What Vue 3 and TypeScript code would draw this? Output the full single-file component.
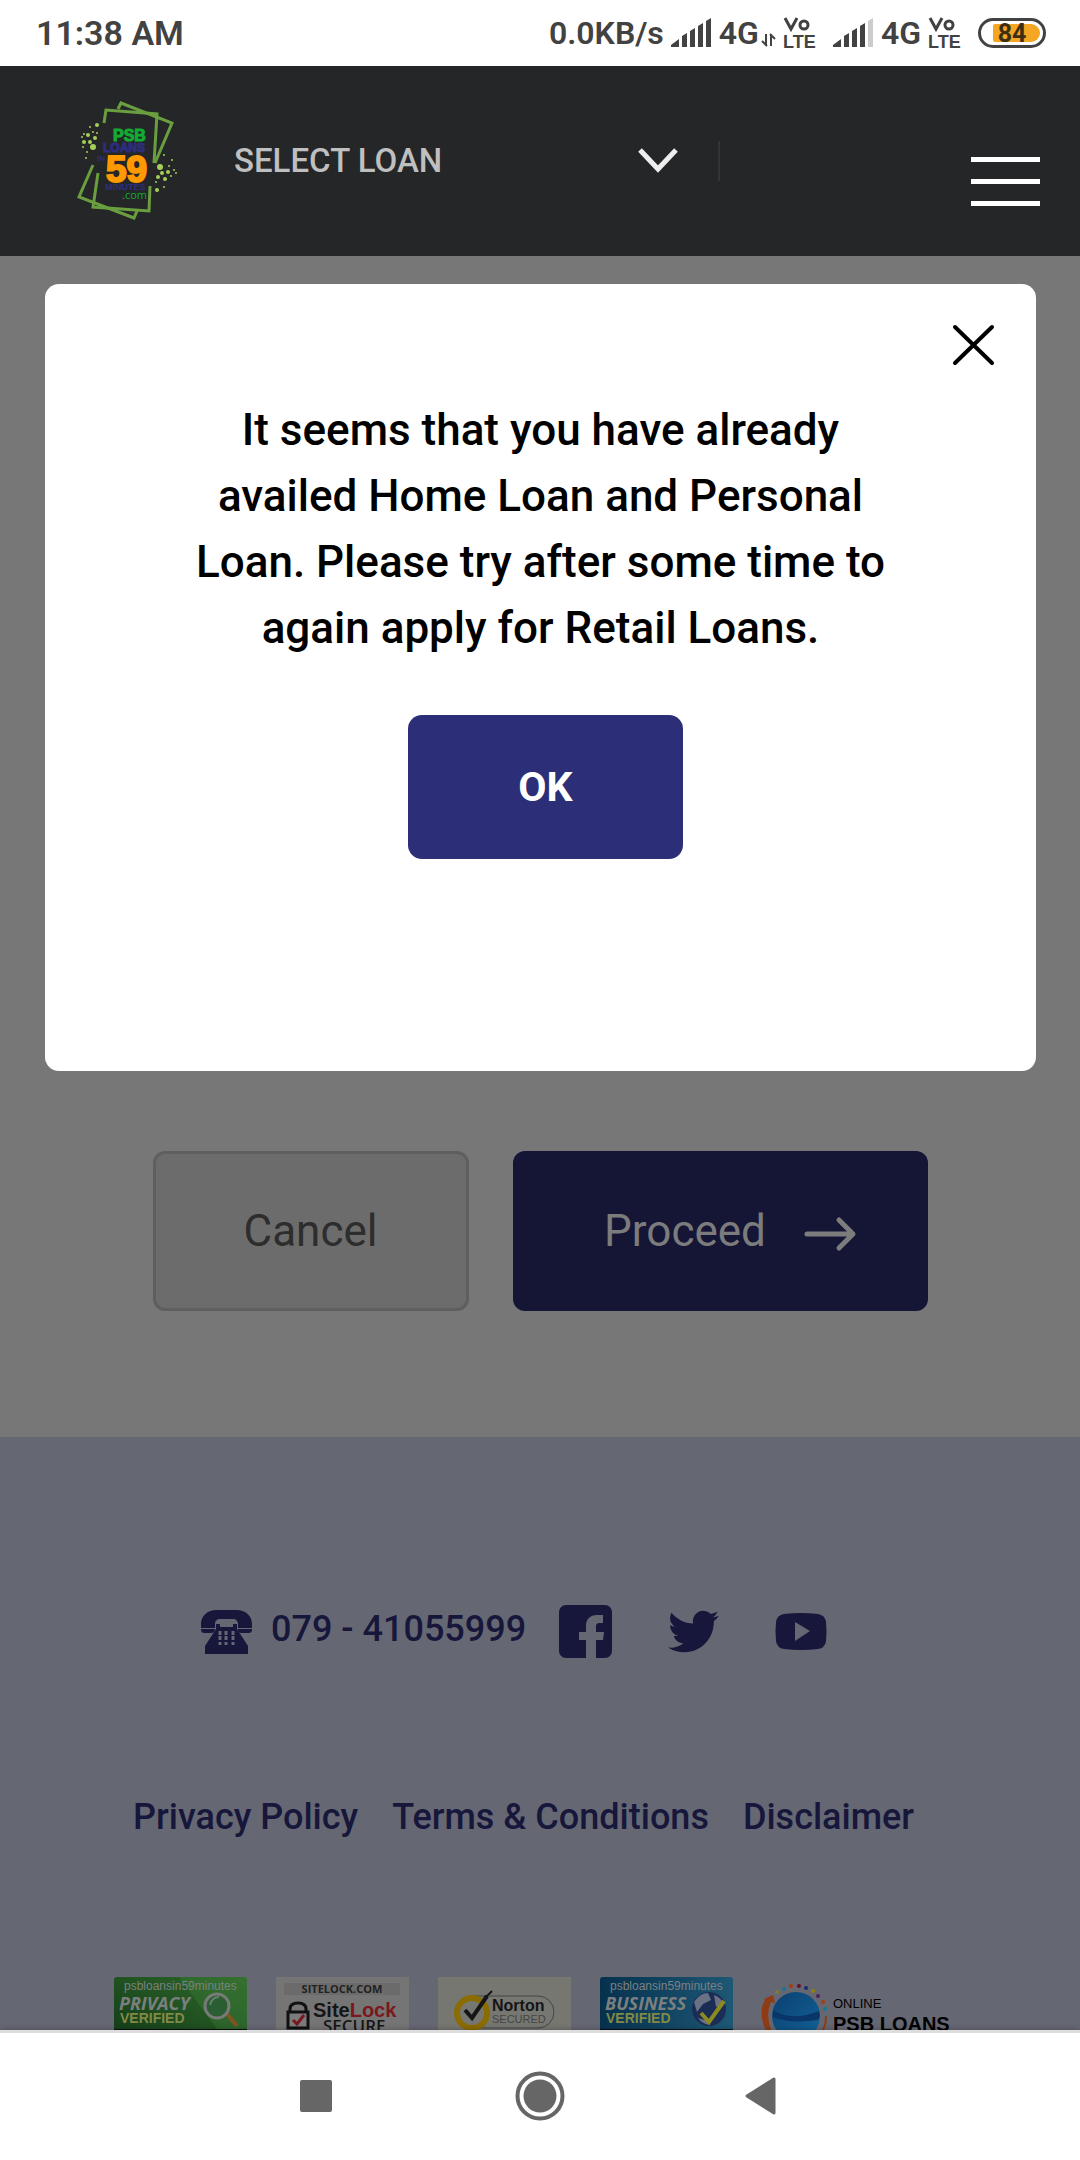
<script setup lang="ts">
import { ref } from 'vue'

interface Dot { x: number; y: number; r: number }
interface ColorDot { x: number; y: number; c: string }

const loan = ref<string>('SELECT LOAN')
const open = ref<boolean>(true)

const sprinkles: Dot[] = [
  { x: 37, y: 35, r: 2 }, { x: 30, y: 37, r: 1 }, { x: 37, y: 43, r: 1 }, { x: 28, y: 45, r: 2 },
  { x: 35, y: 48, r: 2 }, { x: 24, y: 44, r: 1 }, { x: 22, y: 47, r: 1 }, { x: 33, y: 42, r: 1 },
  { x: 24, y: 52, r: 2 }, { x: 30, y: 52, r: 2 }, { x: 33, y: 57, r: 3 }, { x: 23, y: 57, r: 1 },
  { x: 27, y: 62, r: 1 }, { x: 26, y: 68, r: 1 }, { x: 104, y: 65, r: 1 }, { x: 112, y: 70, r: 1 },
  { x: 100, y: 77, r: 3 }, { x: 109, y: 76, r: 1 }, { x: 102, y: 83, r: 2 }, { x: 108, y: 82, r: 2 },
  { x: 114, y: 80, r: 1 }, { x: 98, y: 87, r: 2 }, { x: 105, y: 89, r: 2 }, { x: 111, y: 86, r: 1 },
  { x: 116, y: 83, r: 1 }, { x: 96, y: 92, r: 1 }, { x: 97, y: 100, r: 2 }, { x: 104, y: 97, r: 1 },
]

const orbit: ColorDot[] = [
  { x: 15, y: 15, c: '#7c7c36' }, { x: 22, y: 12, c: '#137a92' }, { x: 29, y: 9, c: '#a83c10' },
  { x: 37, y: 9, c: '#65112f' }, { x: 44, y: 11, c: '#152d6d' }, { x: 51, y: 14, c: '#93800b' },
  { x: 56, y: 19, c: '#4b2263' }, { x: 61, y: 25, c: '#a83c10' }, { x: 63, y: 32, c: '#137a92' },
]
</script>

<template>
  <div class="screen">
    <div class="status">
      <span class="clock">11:38 AM</span>
      <div class="indicators">
        <span class="rate">0.0KB/s</span>
        <svg class="signal" width="40" height="30" viewBox="0 0 40 30" fill="#424242">
          <path d="M0 29v-2l8-6v8zM11 29V18l5-3v14zM19 29V13l5-3v19zM27 29V8l5-3v24zM35 29V3l5-3v29z" />
        </svg>
        <span class="net">4G</span>
        <svg class="updown" width="14" height="14" viewBox="0 0 14 14" fill="none" stroke="#424242" stroke-width="2">
          <path d="M4 1v11M5 13L0 8M9 13V2M8 1l5 5" />
        </svg>
        <svg class="volte" width="33" height="32" viewBox="0 0 33 32" fill="#424242">
          <path d="M1 1l6 11 6-11" fill="none" stroke="#424242" stroke-width="3" />
          <circle cx="20" cy="8" r="4" fill="none" stroke="#424242" stroke-width="3" />
          <text x="-1" y="31" class="lte">LTE</text>
        </svg>
        <svg class="signal two" width="40" height="30" viewBox="0 0 40 30" fill="#424242">
          <path d="M0 29v-2l8-6v8zM11 29V18l5-3v14zM19 29V13l5-3v19zM27 29V8l5-3v24z" />
          <path d="M35 29V3l5-3v29z" fill="#ccc" />
        </svg>
        <span class="net">4G</span>
        <svg class="volte" width="33" height="32" viewBox="0 0 33 32" fill="#424242">
          <path d="M1 1l6 11 6-11" fill="none" stroke="#424242" stroke-width="3" />
          <circle cx="20" cy="8" r="4" fill="none" stroke="#424242" stroke-width="3" />
          <text x="-1" y="31" class="lte">LTE</text>
        </svg>
        <svg class="battery" width="68" height="30" viewBox="0 0 68 30">
          <rect x="1.5" y="1.5" width="65" height="27" rx="13.5" fill="#fff" stroke="#424242" stroke-width="3" />
          <path d="M17 6h36a9 9 0 0 1 0 18H17a2 2 0 0 1-2-2V8a2 2 0 0 1 2-2z" fill="#f5a623" />
          <text x="34" y="24" text-anchor="middle" class="charge">84</text>
        </svg>
      </div>
    </div>

    <header class="header">
      <a class="logo" href="#" aria-label="PSB Loans in 59 Minutes">
        <svg width="140" height="140" viewBox="0 0 140 140">
          <g fill="none" stroke="#6a9f3f" stroke-width="3">
            <path d="M44 33l2-13 51 4-3 49" />
            <path d="M58 19l3-6 51 20-17 40" />
            <path d="M38 83l-5 34 56 4 1-25" />
            <path d="M33 75l-14 32 55 21 3-7" />
          </g>
          <circle v-for="(d, i) in sprinkles" :key="i" :cx="d.x" :cy="d.y" :r="d.r" fill="#a6cf5a" />
          <g class="mark">
            <text x="53" y="51" font-size="16" fill="#12ac33" stroke="#12ac33">PSB</text>
            <text x="43" y="62" font-size="12" fill="#2d2e7f" stroke="#2d2e7f">LOANS</text>
            <text x="37" y="71" font-size="8" fill="#2d2e7f">IN</text>
            <text x="46" y="92" font-size="37" fill="#f90" stroke="#f90" stroke-width="2">59</text>
            <text x="45" y="100" font-size="9" fill="#2d2e7f">MINUTES</text>
          </g>
          <text x="62" y="109" class="com">.com</text>
        </svg>
      </a>
      <label class="picker">
        <select v-model="loan" aria-label="Select loan">
          <option>SELECT LOAN</option>
        </select>
        <svg width="36" height="26" viewBox="0 0 36 26" fill="none" stroke="#eee" stroke-width="5">
          <path d="M0 2l18 19L36 2" />
        </svg>
      </label>
      <button class="menu" type="button" aria-label="Menu"><i></i><i></i><i></i></button>
    </header>

    <div class="view">
      <main class="actions">
        <button class="btn cancel" type="button">Cancel</button>
        <button class="btn proceed" type="button">
          Proceed
          <svg width="52" height="34" viewBox="0 0 52 34" fill="none" stroke="#7c7c7c" stroke-width="5" stroke-linecap="round" stroke-linejoin="round">
            <path d="M3 17h45M35 3l14 14-14 14" />
          </svg>
        </button>
      </main>

      <footer class="footer">
        <div class="contact">
          <a class="phone" href="tel:07941055999">
            <svg width="52" height="44" viewBox="0 0 52 44" fill="#17163b">
              <path d="M1 18v-4C1 7 6 0 17 0h19c11 0 16 7 16 14v4H38v-4c0-3-2-5-5-5H20c-3 0-5 2-5 5v4zM1 19h14c0 3-2 4-4 4H5c-3 0-4-1-4-4zM38 19h14c0 3-1 4-4 4h-6c-3 0-4-1-4-4z" />
              <path d="M16 14h4v3h13v-3h4v5l11 17v8H5v-8l11-17z" />
              <path d="M20 21v4M26 21v4M33 21v4M20 26v4M26 26v4M33 26v4M20 32v3M26 32v3M33 32v3" stroke="#656773" stroke-width="3" />
            </svg>
            <span>079 - 41055999</span>
          </a>
          <a class="facebook" href="#" aria-label="Facebook">
            <svg width="53" height="53" viewBox="0 0 53 53" fill="#17163b">
              <path d="M7 0h39a7 7 0 0 1 7 7v39a7 7 0 0 1-7 7H37V35h7l1-8h-8v-5c0-3 1-4 4-4h3v-8h-6c-7 0-11 4-11 11v6h-7v8h7v18H7a7 7 0 0 1-7-7V7a7 7 0 0 1 7-7z" />
            </svg>
          </a>
          <a class="twitter" href="#" aria-label="Twitter">
            <svg width="51" height="43" viewBox="0 2 24 20" fill="#17163b">
              <path d="M23.953 4.57a10 10 0 01-2.825.775 4.958 4.958 0 002.163-2.723c-.951.555-2.005.959-3.127 1.184a4.92 4.92 0 00-8.384 4.482C7.69 8.095 4.067 6.13 1.64 3.162a4.822 4.822 0 00-.666 2.475c0 1.71.87 3.213 2.188 4.096a4.904 4.904 0 01-2.228-.616v.06a4.923 4.923 0 003.946 4.827 4.996 4.996 0 01-2.212.085 4.936 4.936 0 004.604 3.417 9.867 9.867 0 01-6.102 2.105c-.39 0-.779-.023-1.17-.067a13.995 13.995 0 007.557 2.209c9.053 0 13.998-7.496 13.998-13.985 0-.21 0-.42-.015-.63A9.935 9.935 0 0024 4.59z" />
            </svg>
          </a>
          <a class="youtube" href="#" aria-label="YouTube">
            <svg width="52" height="37" viewBox="0 0 52 37">
              <path d="M9 1q17-2 34 0 7 1 8 8 1 10 0 19-1 7-8 8-17 2-34 0-7-1-8-8-1-10 0-19 1-7 8-8z" fill="#17163b" />
              <path d="M20 9l15 9-15 10z" fill="#656773" />
            </svg>
          </a>
        </div>

        <nav class="links">
          <a href="#">Privacy Policy</a>
          <a href="#">Terms &amp; Conditions</a>
          <a href="#">Disclaimer</a>
        </nav>

        <div class="badges">
          <svg width="133" height="70" viewBox="0 0 133 70">
            <defs>
              <linearGradient id="green" x1="0" x2="1" y1="1" y2="0">
                <stop offset="0" stop-color="#123817" /><stop offset="1" stop-color="#2f6b2b" />
              </linearGradient>
            </defs>
            <rect width="133" height="70" rx="3" fill="url(#green)" />
            <path d="M65 0h68v52H103z" fill="#3d7a38" opacity=".4" />
            <path d="M0 52h133v18H0z" fill="#0c120d" />
            <text x="10" y="13" class="host">psbloansin59minutes</text>
            <text x="5" y="33" class="seal">PRIVACY</text>
            <text x="6" y="46" class="verified">VERIFIED</text>
            <path d="M113 37l10 12" stroke="#7f5420" stroke-width="4" />
            <circle cx="103" cy="29" r="12" fill="#2a5d32" stroke="#777b78" stroke-width="3" />
            <path d="M96 28q2-8 9-8" stroke="#66816a" stroke-width="2" fill="none" />
          </svg>
          <svg width="133" height="70" viewBox="0 0 133 70">
            <rect width="133" height="70" fill="#757575" />
            <rect x="8" y="6" width="116" height="12" fill="#6b6b6b" />
            <text x="66" y="16" text-anchor="middle" class="site">SITELOCK.COM</text>
            <path d="M14 35v-3q0-6 8-6t8 6v3" fill="none" stroke="#111" stroke-width="3" />
            <rect x="12" y="35" width="20" height="16" fill="#7b7b7b" stroke="#111" stroke-width="3" />
            <path d="M17 43l4 4 7-9" fill="none" stroke="#7b171d" stroke-width="3" />
            <text x="37" y="40" class="lock"><tspan fill="#151515">Site</tspan><tspan fill="#7b171d">Lock</tspan></text>
            <text x="47" y="55" class="secure">SECURE</text>
          </svg>
          <svg width="133" height="70" viewBox="0 0 133 70">
            <rect width="133" height="70" fill="#777772" />
            <path d="M34 19h66a16 16 0 0 1 0 32H34" fill="none" stroke="#444" stroke-width="1" />
            <circle cx="34" cy="36" r="15" fill="#777772" stroke="#8a6c03" stroke-width="6" />
            <path d="M27 33l7 8 15-22" fill="none" stroke="#151515" stroke-width="4" />
            <path d="M48 20l6-6" stroke="#151515" stroke-width="2" />
            <text x="54" y="34" class="norton">Norton</text>
            <text x="54" y="46" class="secured">SECURED</text>
          </svg>
          <svg width="133" height="70" viewBox="0 0 133 70">
            <defs>
              <linearGradient id="blue" x1="0" x2="1">
                <stop offset="0" stop-color="#06314e" /><stop offset="1" stop-color="#1d5875" />
              </linearGradient>
            </defs>
            <rect width="133" height="70" rx="3" fill="url(#blue)" />
            <path d="M0 52h133v18H0z" fill="#0c1014" />
            <text x="10" y="13" class="host">psbloansin59minutes</text>
            <text x="5" y="33" class="seal">BUSINESS</text>
            <text x="6" y="46" class="verified">VERIFIED</text>
            <circle cx="109" cy="32" r="17" fill="#1b2c55" />
            <path d="M94 25q6-9 14-9l3 7-8 4-6 8zM114 18q8 3 10 10l-8 2zM98 41l10 3 2 4q-8-1-12-7z" fill="#697184" />
            <path d="M101 36l8 9 15-21" fill="none" stroke="#8b8b1f" stroke-width="4" />
          </svg>
          <svg width="194" height="70" viewBox="0 0 194 70">
            <defs>
              <linearGradient id="globe" x1="0" x2="1" y1="0" y2="1">
                <stop offset="0" stop-color="#0c3f70" /><stop offset="1" stop-color="#12649a" />
              </linearGradient>
            </defs>
            <circle cx="34" cy="39" r="24" fill="url(#globe)" />
            <path d="M11 33q18 12 46 1 2 8-2 9-26 4-44-3z" fill="#0a3568" />
            <path d="M5 56Q-5 36 3 23l-1-1 9-4 2 8-4-1q-6 12 1 31z" fill="#8f3c14" />
            <path d="M64 39q0 10-4 15" fill="none" stroke="#8f3c14" stroke-width="2" />
            <circle v-for="(d, i) in orbit" :key="i" :cx="d.x" :cy="d.y" r="2" :fill="d.c" />
            <text x="71" y="31" class="online">ONLINE</text>
            <text x="71" y="54" class="psb">PSB LOANS</text>
          </svg>
        </div>
      </footer>

      <div v-if="open" class="overlay">
        <section class="dialog" role="dialog" aria-modal="true">
          <button class="close" type="button" aria-label="Close" @click="open = false">
            <svg width="41" height="40" viewBox="0 0 41 40" stroke="#000" stroke-width="4" stroke-linecap="round">
              <path d="M2 2l37 36M39 2L2 38" />
            </svg>
          </button>
          <p>It seems that you have already availed Home Loan and Personal Loan. Please try after some time to again apply for Retail Loans.</p>
          <button class="ok" type="button" @click="open = false">OK</button>
        </section>
      </div>
    </div>

    <div class="sysnav">
      <button type="button" aria-label="Recent apps">
        <svg width="50" height="50" viewBox="0 0 50 50"><rect x="9" y="9" width="32" height="32" rx="2" fill="#666" /></svg>
      </button>
      <button type="button" aria-label="Home">
        <svg width="50" height="50" viewBox="0 0 50 50">
          <circle cx="25" cy="25" r="22.5" fill="none" stroke="#666" stroke-width="4" />
          <circle cx="25" cy="25" r="16.5" fill="#666" />
        </svg>
      </button>
      <button type="button" aria-label="Back">
        <svg width="50" height="50" viewBox="0 0 50 50"><path d="M8 25L35 8v34z" fill="#666" stroke="#666" stroke-width="3" stroke-linejoin="round" /></svg>
      </button>
    </div>
  </div>
</template>

<style>
body {
  margin: 0;
}
</style>

<style scoped>
.screen {
  display: flex;
  flex-direction: column;
  height: 100vh;
  overflow: hidden;
  background: #777;
  font-family: Roboto, sans-serif;
}
.screen * {
  box-sizing: border-box;
}
svg {
  display: block;
  flex: none;
  overflow: visible;
}
button {
  margin: 0;
  padding: 0;
  border: 0;
  background: none;
  font-family: inherit;
  cursor: pointer;
}
a {
  color: inherit;
  text-decoration: none;
}

.status {
  flex: none;
  display: flex;
  justify-content: space-between;
  align-items: center;
  height: 66px;
  padding: 0 34px 0 36px;
  background: #fff;
  color: #424242;
  font-weight: 600;
}
.clock {
  font-size: 34px;
  line-height: 40px;
}
.indicators {
  display: flex;
  align-items: center;
  font-size: 32px;
  line-height: 38px;
}
.signal {
  margin: 0 8px 0 7px;
}
.updown {
  margin: 14px 8px 0 3px;
}
.signal.two {
  margin-left: 16px;
}
.net + .volte {
  margin-left: 8px;
}
.battery {
  margin-left: 16px;
}
.lte {
  font: 700 18px "Liberation Sans", sans-serif;
}
.charge {
  font: 700 25px Roboto, sans-serif;
  fill: #3d2f14;
}

.header {
  flex: none;
  display: flex;
  height: 190px;
  padding: 0 40px 0 60px;
  background: #252628;
}
.logo {
  margin-top: 24px;
}
.mark {
  font-family: "Liberation Sans", sans-serif;
  font-weight: 700;
}
.com {
  font: 11px "Open Sans", sans-serif;
  fill: #12ac33;
}
.picker {
  display: flex;
  align-items: center;
  justify-content: space-between;
  width: 486px;
  height: 40px;
  margin: 75px auto 0 34px;
  padding-right: 42px;
  border-right: 2px solid #333436;
}
.picker select {
  appearance: none;
  flex: 1;
  margin: 0;
  padding: 0;
  border: 0;
  background: none;
  color: #bfbfbf;
  font: 500 33px/40px Roboto, sans-serif;
}
.menu {
  display: flex;
  flex-direction: column;
  justify-content: space-between;
  width: 69px;
  height: 49px;
  margin-top: 91px;
}
.menu i {
  height: 5px;
  background: #fff;
}

.view {
  position: relative;
  flex: 1;
  min-height: 0;
  overflow: hidden;
}
.actions {
  display: flex;
  justify-content: center;
  gap: 44px;
  padding: 895px 0 126px;
  background: #777;
}
.btn {
  display: flex;
  align-items: center;
  justify-content: center;
  height: 160px;
  border-radius: 12px;
  font-size: 44px;
  line-height: 52px;
}
.cancel {
  width: 316px;
  border: 3px solid #5f5f5f;
  background: #6c6c6c;
  color: #2d2d2d;
}
.proceed {
  gap: 38px;
  width: 415px;
  padding-left: 20px;
  background: #151636;
  color: #7c7c7c;
}
.proceed svg {
  margin-top: 6px;
}

.footer {
  padding: 168px 0 40px;
  background: #656773;
  color: #17163b;
  font-size: 36px;
  line-height: 42px;
  font-weight: 500;
}
.contact {
  display: flex;
  align-items: center;
  padding-left: 200px;
}
.phone {
  display: flex;
  align-items: center;
  gap: 19px;
}
.phone span {
  padding-bottom: 5px;
}
.facebook {
  margin-left: 33px;
}
.twitter,
.youtube {
  margin-left: 56px;
}
.links {
  display: flex;
  gap: 34px;
  margin-top: 138px;
  padding-left: 133px;
}
.badges {
  display: flex;
  gap: 29px;
  margin-top: 139px;
  padding-left: 114px;
}
.host {
  font: 12px "Liberation Sans", sans-serif;
  fill: #7b8080;
}
.seal {
  font: italic 700 18px "Open Sans", sans-serif;
  fill: #7b7f80;
}
.verified {
  font: 700 14px "Liberation Sans", sans-serif;
  fill: #818a45;
}
.site {
  font: 700 11px "Open Sans", sans-serif;
  fill: #222;
}
.lock {
  font: 700 20px "Liberation Sans", sans-serif;
}
.secure {
  font: 600 17px "Open Sans", sans-serif;
  fill: #151515;
}
.norton {
  font: 700 16px "Liberation Sans", sans-serif;
  fill: #151515;
}
.secured {
  font: 11px "Liberation Sans", sans-serif;
  fill: #444;
}
.online {
  font: 13px "Liberation Sans", sans-serif;
  fill: #000;
}
.psb {
  font: 700 20px "Liberation Sans", sans-serif;
  fill: #000;
}

.overlay {
  position: absolute;
  inset: 0;
  padding: 28px 44px 0 45px;
}
.dialog {
  display: flex;
  flex-direction: column;
  align-items: center;
  padding: 41px 42px 212px;
  border-radius: 14px;
  background: #fff;
}
.close {
  align-self: flex-end;
}
.dialog p {
  max-width: 712px;
  margin: 32px 0 54px;
  color: #000;
  font-size: 44px;
  line-height: 66px;
  font-weight: 500;
  text-align: center;
}
.ok {
  width: 275px;
  height: 144px;
  margin-left: 10px;
  border-radius: 14px;
  background: #2d2e78;
  color: #fff;
  font-size: 41px;
  font-weight: 700;
}

.sysnav {
  position: relative;
  flex: none;
  display: flex;
  justify-content: center;
  align-items: center;
  gap: 174px;
  height: 130px;
  padding-bottom: 2px;
  border-top: 3px solid #ddd;
  background: #fff;
  box-shadow: 0 0 6px rgba(0, 0, 0, 0.3);
}
</style>
